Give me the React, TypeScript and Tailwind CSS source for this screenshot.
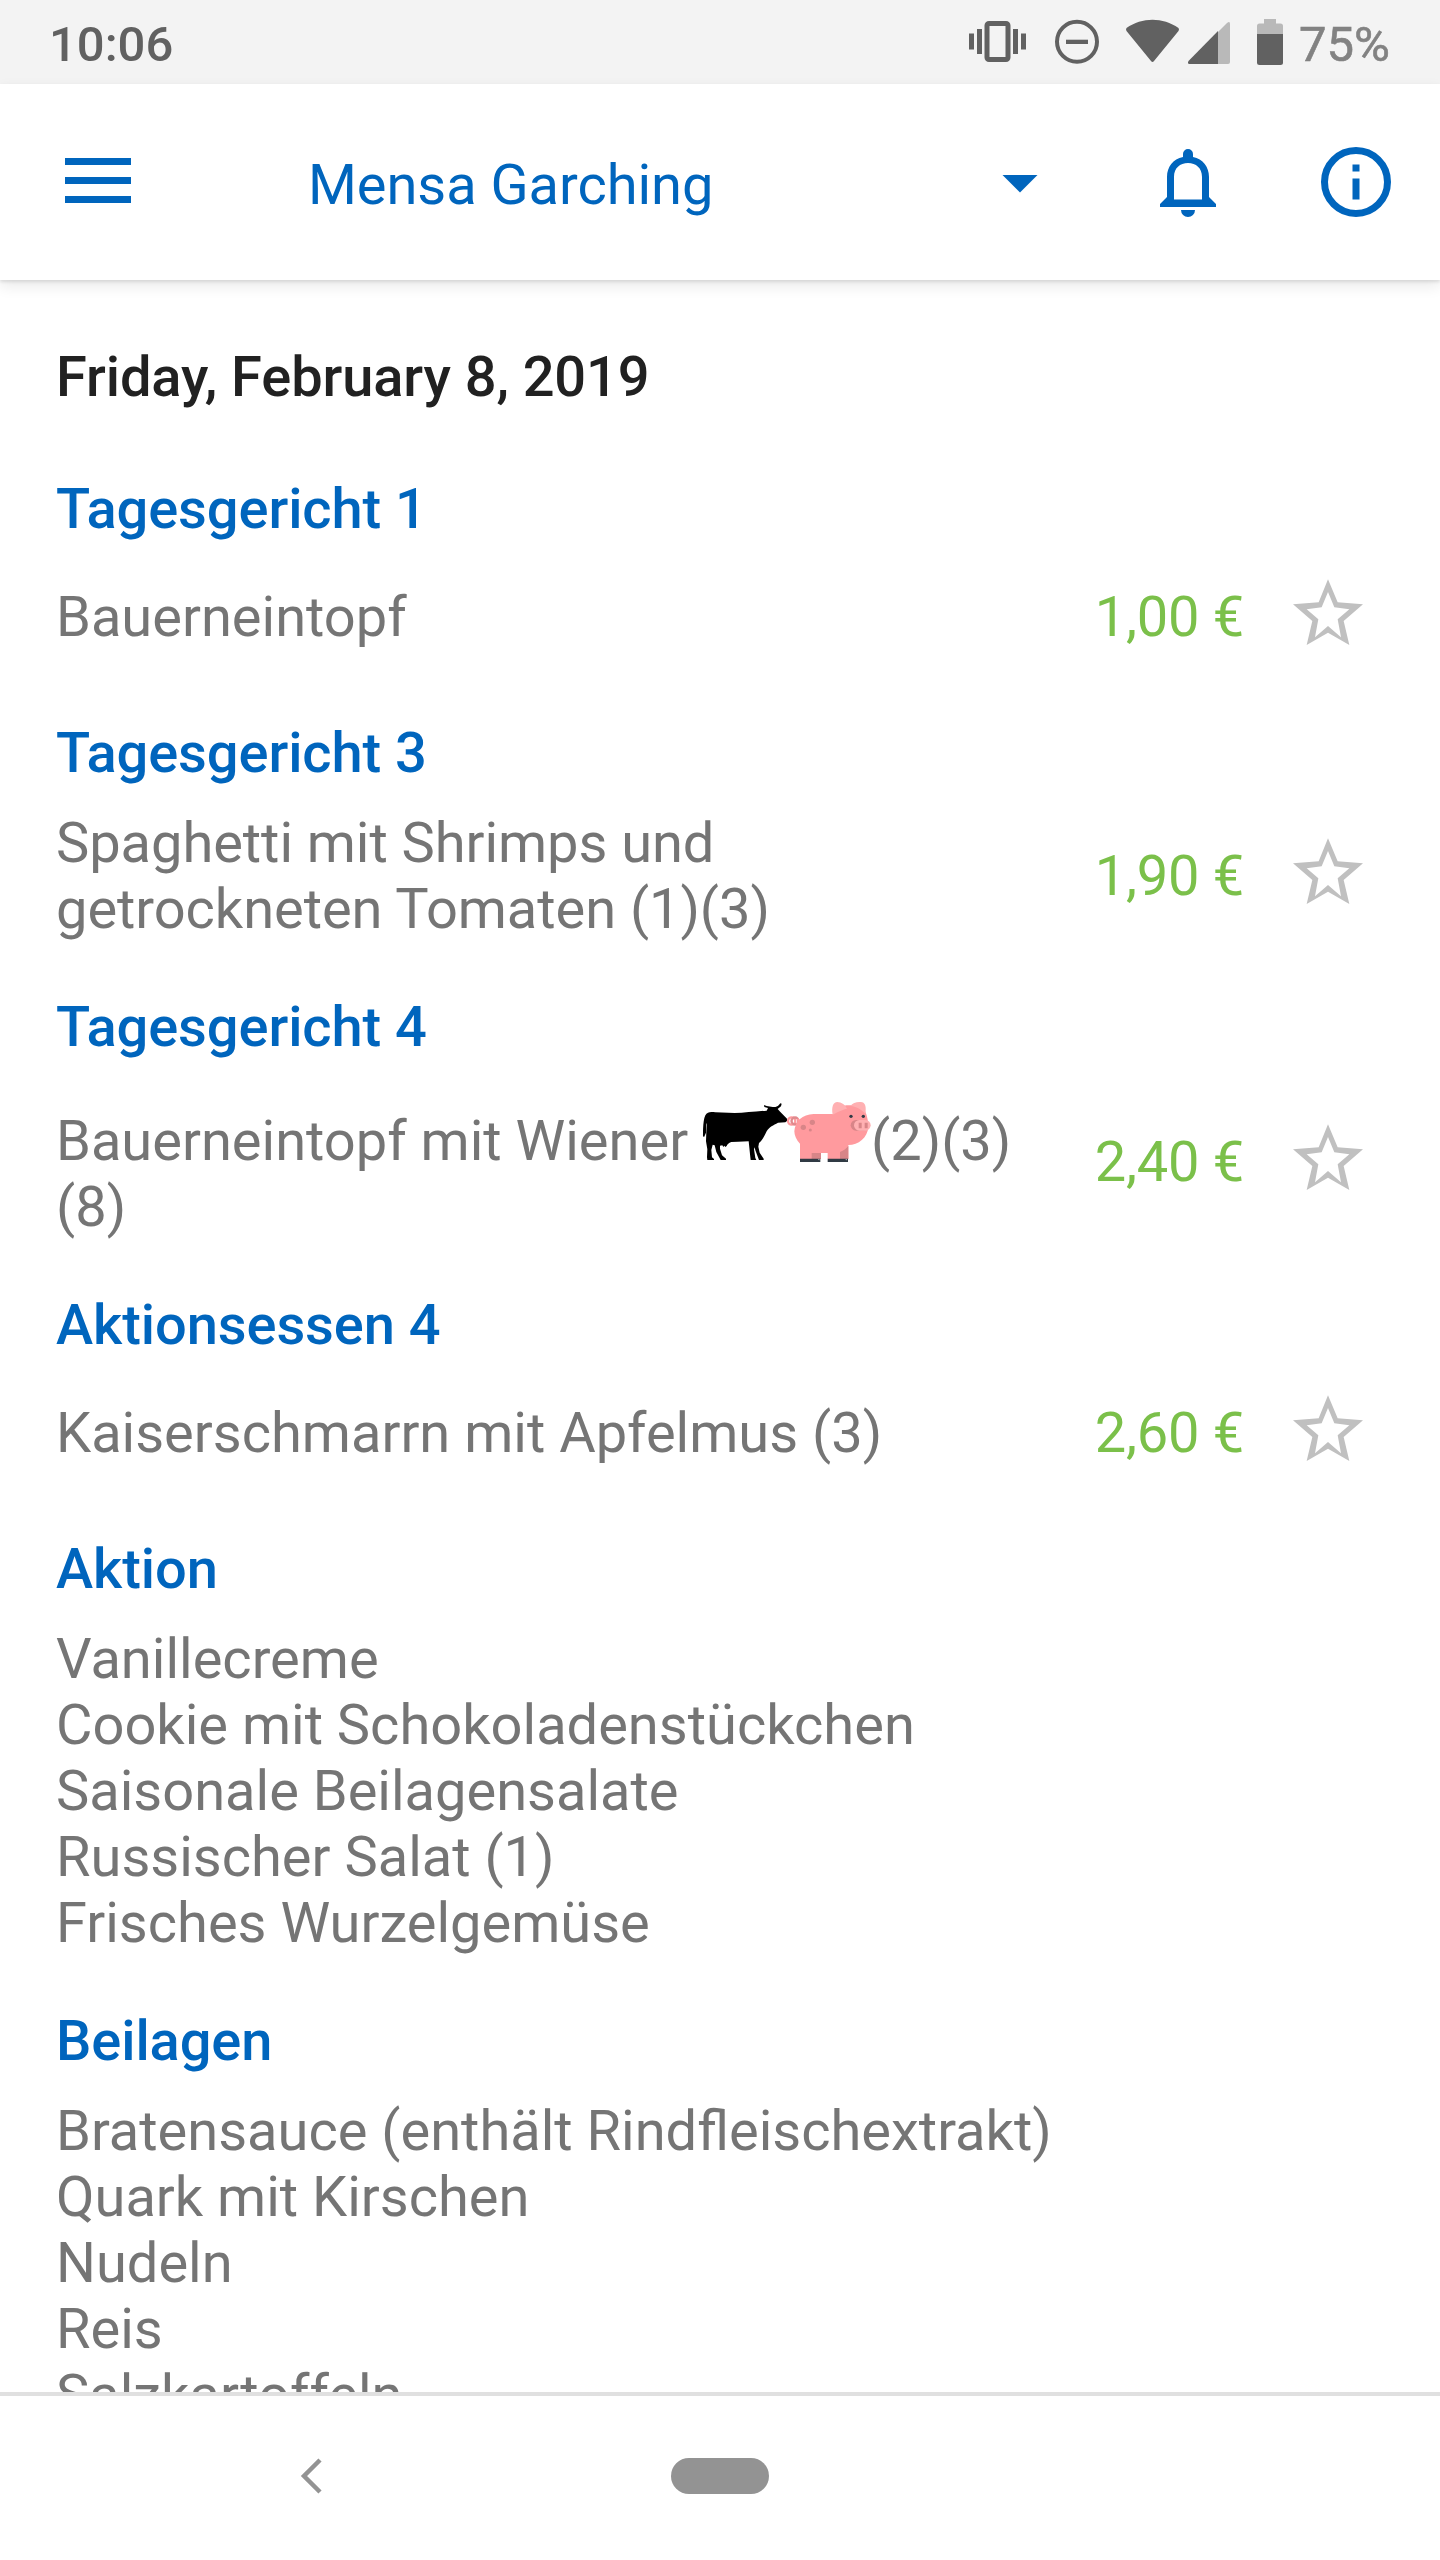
import React from "react";

const blue = "#0065bd";

function Star() {
  return (
    <svg className="h-[72px] w-[72px] shrink-0" viewBox="696 57 216 216" fill="#c0c0c0">
      <path
        fillRule="evenodd"
        d="M804 58 833 127 909 133 851 183 868 255 804 218 740 255 757 183 699 133 776 127ZM804 96 785 142 740 148 775 178 765 232 804 198 843 232 833 178 868 148 823 142Z"
      />
    </svg>
  );
}

function Cow() {
  return (
    <svg className="ml-px inline-block h-[76px] w-[84px] overflow-visible align-baseline" viewBox="15 -36 252 228">
      <path
        fill="#000"
        d="M15 120C15 90 16 54 30 50C36 47 44 48 52 49L110 51C140 51 170 46 206 44L210 36 199 33 198 27 206 30 224 33C232 34 238 32 242 28L247 22 251 23 249 31 239 39 245 46 267 68 267 75 262 79 240 80C226 88 214 92 206 106C198 122 192 134 183 141L181 152 185 170 197 188V192H183L172 163 170 154 168 160 172 186 175 192H158L157 184 152 136 120 137 100 138C92 141 88 144 86 150L82 153 79 149 76 153 73 148 66 149 66 158 72 178 84 188V192H68L55 168 50 148 44 146 40 162 42 184 48 189V192H28L27 184 28 160 24 136 26 80 24 86 24 110 18 124Z"
      />
    </svg>
  );
}

function Pig() {
  return (
    <svg className="inline-block h-[76px] w-[84px] overflow-visible align-baseline" viewBox="12 -36 252 228">
      <g fill="none" strokeWidth="7">
        <circle cx="26" cy="75" r="11" stroke="#ff9a9e" />
        <circle cx="36" cy="75" r="10.500" stroke="#e0898d" />
        <path d="M44 68C49 74 48 83 40 85" stroke="#ff9a9e" />
      </g>
      <path
        fill="#ff9a9e"
        d="M92 54H150L182 29C210 26 236 30 246 44C253 60 256 78 256 92C254 126 226 146 196 147V189H134V171H114V189H51V143C40 132 34 118 34 106C36 76 58 55 92 54Z"
      />
      <path fill="#d88588" d="M86 171H114V189H86ZM171 168C182 164 190 158 196 150V189H171Z" />
      <g fill="#d88588">
        <circle cx="88" cy="79" r="8" />
        <circle cx="61" cy="94" r="8" />
        <circle cx="82" cy="102" r="4.500" />
        <rect x="203" y="72" width="55" height="32" rx="16" />
      </g>
      <path
        fill="#ffb0b2"
        d="M149 56C145 34 150 18 163 18C175 18 188 28 192 38C182 40 164 48 149 56ZM202 30C210 20 224 16 238 19C248 22 250 36 247 54C238 42 222 32 202 30Z"
      />
      <rect x="213" y="72" width="50" height="32" rx="16" fill="#ffb0b2" />
      <path fill="#d88588" d="M227 80h9v17h-9ZM245 80h9v17h-9Z" />
      <circle cx="204" cy="61" r="5" fill="#303a44" />
      <circle cx="241" cy="61" r="5" fill="#303a44" />
      <path fill="#303a44" d="M51 188H112V198H51ZM134 188H195V198H134Z" />
      <path fill="#fff" d="M105 191l4-2v4zM187 191l4-2v4z" />
    </svg>
  );
}

function Heading({ children }: { children: React.ReactNode }) {
  return <h2 className="font-medium tracking-[-0.08px] text-[#0065bd]">{children}</h2>;
}

function Dish({ title, price, children }: { title: string; price: string; children: React.ReactNode }) {
  return (
    <section>
      <Heading>{title}</Heading>
      <div className="box-content flex min-h-[102px] items-center pt-6 pb-[52px]">
        <div className="w-[1000px] shrink-0">{children}</div>
        <div className="w-[188px] shrink-0 text-right tracking-[-0.27px] text-[#7bc04a]">{price}</div>
        <div className="-mt-1 ml-12 shrink-0">
          <Star />
        </div>
      </div>
    </section>
  );
}

function SideList({ title, items }: { title: string; items: string[] }) {
  return (
    <section>
      <Heading>{title}</Heading>
      <ul className="pt-6 pb-[52px]">
        {items.map((item) => (
          <li key={item}>{item}</li>
        ))}
      </ul>
    </section>
  );
}

function StatusBar() {
  return (
    <div className="flex h-[84px] shrink-0 items-center justify-between bg-[#f3f3f3] pr-[50px] pl-[49px]">
      <span className="pt-1 text-[49px] leading-[57px] font-medium text-[#616161]">10:06</span>
      <div className="flex h-full items-center">
        <svg className="h-[84px] w-[330px]" viewBox="960 0 330 84" fill="#616161">
          <path d="M969 33.500h5v16h-5zM977 29h5v25h-5zM1013 29h5v25h-5zM1021 33.500h5v16h-5z" />
          <rect x="987" y="23.500" width="21" height="36" rx="2" fill="none" stroke="#616161" strokeWidth="5" />
          <circle cx="1077" cy="41.700" r="20" fill="none" stroke="#616161" strokeWidth="4" />
          <path d="M1066 39.700h22v4.300h-22z" />
          <path d="M1126.500 28C1142 17 1163 17 1178.500 28Q1179.500 29.500 1178.500 31L1154 61Q1152.500 63 1151 61L1126.500 31Q1125.500 29.500 1126.500 28Z" />
          <path fill="#b9b9b9" d="M1218 32 1227 23Q1230 20.500 1230 24V62Q1230 64 1228 64H1218Z" />
          <path d="M1218 31V64H1189.500Q1187 64 1188.500 61Z" />
          <path fill="#b9b9b9" d="M1257 34V26Q1257 23.500 1259.500 23.500H1264V19H1276V23.500H1280.500Q1283 23.500 1283 26V34Z" />
          <path d="M1257 34H1283V62.500Q1283 65 1280.500 65H1259.500Q1257 65 1257 62.500Z" />
        </svg>
        <span className="w-[100px] pt-1 text-right text-[49px] leading-[57px] whitespace-nowrap text-[#828282] [-webkit-text-stroke:0.6px_#828282]">
          75%
        </span>
      </div>
    </div>
  );
}

function AppBar() {
  return (
    <header className="z-10 flex h-[196px] shrink-0 items-center bg-white pl-14 shadow-[0_2px_3px_rgba(0,0,0,0.10),0_6px_14px_rgba(0,0,0,0.09)]">
      <svg className="h-[84px] w-[84px] shrink-0" viewBox="56 140 84 84" fill={blue}>
        <path d="M65 158h66v7h-66zM65 177h66v7h-66zM65 196h66v7h-66z" />
      </svg>
      <div className="ml-[168px] w-[692px] shrink-0 pt-1.5 tracking-[-0.05px] text-[#0065bd]">Mensa Garching</div>
      <svg className="h-[84px] w-[440px] shrink-0" viewBox="1000 140 440 84" fill={blue}>
        <path d="M1002.500 175H1037.500L1020 192.500Z" />
        <path
          fillRule="evenodd"
          d="M1183 157V154A5 5 0 0 1 1193 154V157C1203 159 1209 167 1209 177V197L1216 204V207H1160V204L1167 197V177C1167 167 1173 159 1183 157ZM1174 199.500H1202V177C1202 168 1196 163 1188 163S1174 168 1174 177ZM1181 210H1195A7 7 0 0 1 1181 210Z"
        />
        <circle cx="1356" cy="182" r="31.500" fill="none" stroke={blue} strokeWidth="7" />
        <path d="M1352.500 164.500h7v7h-7zM1352.500 178.500h7v21h-7z" />
      </svg>
    </header>
  );
}

export default function App() {
  return (
    <div className="flex h-[2560px] w-[1440px] flex-col overflow-hidden bg-white font-[Roboto,sans-serif] text-[56px] leading-[66px] text-[#757575]">
      <StatusBar />
      <AppBar />
      <main className="min-h-0 flex-1 overflow-hidden pt-16 pl-14">
        <h1 className="mb-[66px] font-medium tracking-[-0.1px] text-[#212121]">Friday, February 8, 2019</h1>
        <Dish title="Tagesgericht 1" price="1,00 €">
          Bauerneintopf
        </Dish>
        <Dish title="Tagesgericht 3" price="1,90 €">
          <span className="tracking-[-0.05px]">
            Spaghetti mit Shrimps und
            <br />
            getrockneten Tomaten (1)(3)
          </span>
        </Dish>
        <Dish title="Tagesgericht 4" price="2,40 €">
          Bauerneintopf mit Wiener <Cow />
          <Pig />
          (2)(3)
          <br />
          (8)
        </Dish>
        <Dish title="Aktionsessen 4" price="2,60 €">
          Kaiserschmarrn mit Apfelmus (3)
        </Dish>
        <SideList
          title="Aktion"
          items={[
            "Vanillecreme",
            "Cookie mit Schokoladenstückchen",
            "Saisonale Beilagensalate",
            "Russischer Salat (1)",
            "Frisches Wurzelgemüse",
          ]}
        />
        <SideList
          title="Beilagen"
          items={["Bratensauce (enthält Rindfleischextrakt)", "Quark mit Kirschen", "Nudeln", "Reis", "Salzkartoffeln"]}
        />
      </main>
      <nav className="flex h-[168px] shrink-0 items-center border-t-4 border-[#e0e0e0] pb-1">
        <svg className="ml-[299px] h-10 w-6" viewBox="0 0 24 40" fill="none">
          <path d="M21 4 5 20 21 36" stroke="#939393" strokeWidth="4.500" />
        </svg>
        <div className="ml-[348px] h-9 w-[98px] rounded-full bg-[#939393]" />
      </nav>
    </div>
  );
}
